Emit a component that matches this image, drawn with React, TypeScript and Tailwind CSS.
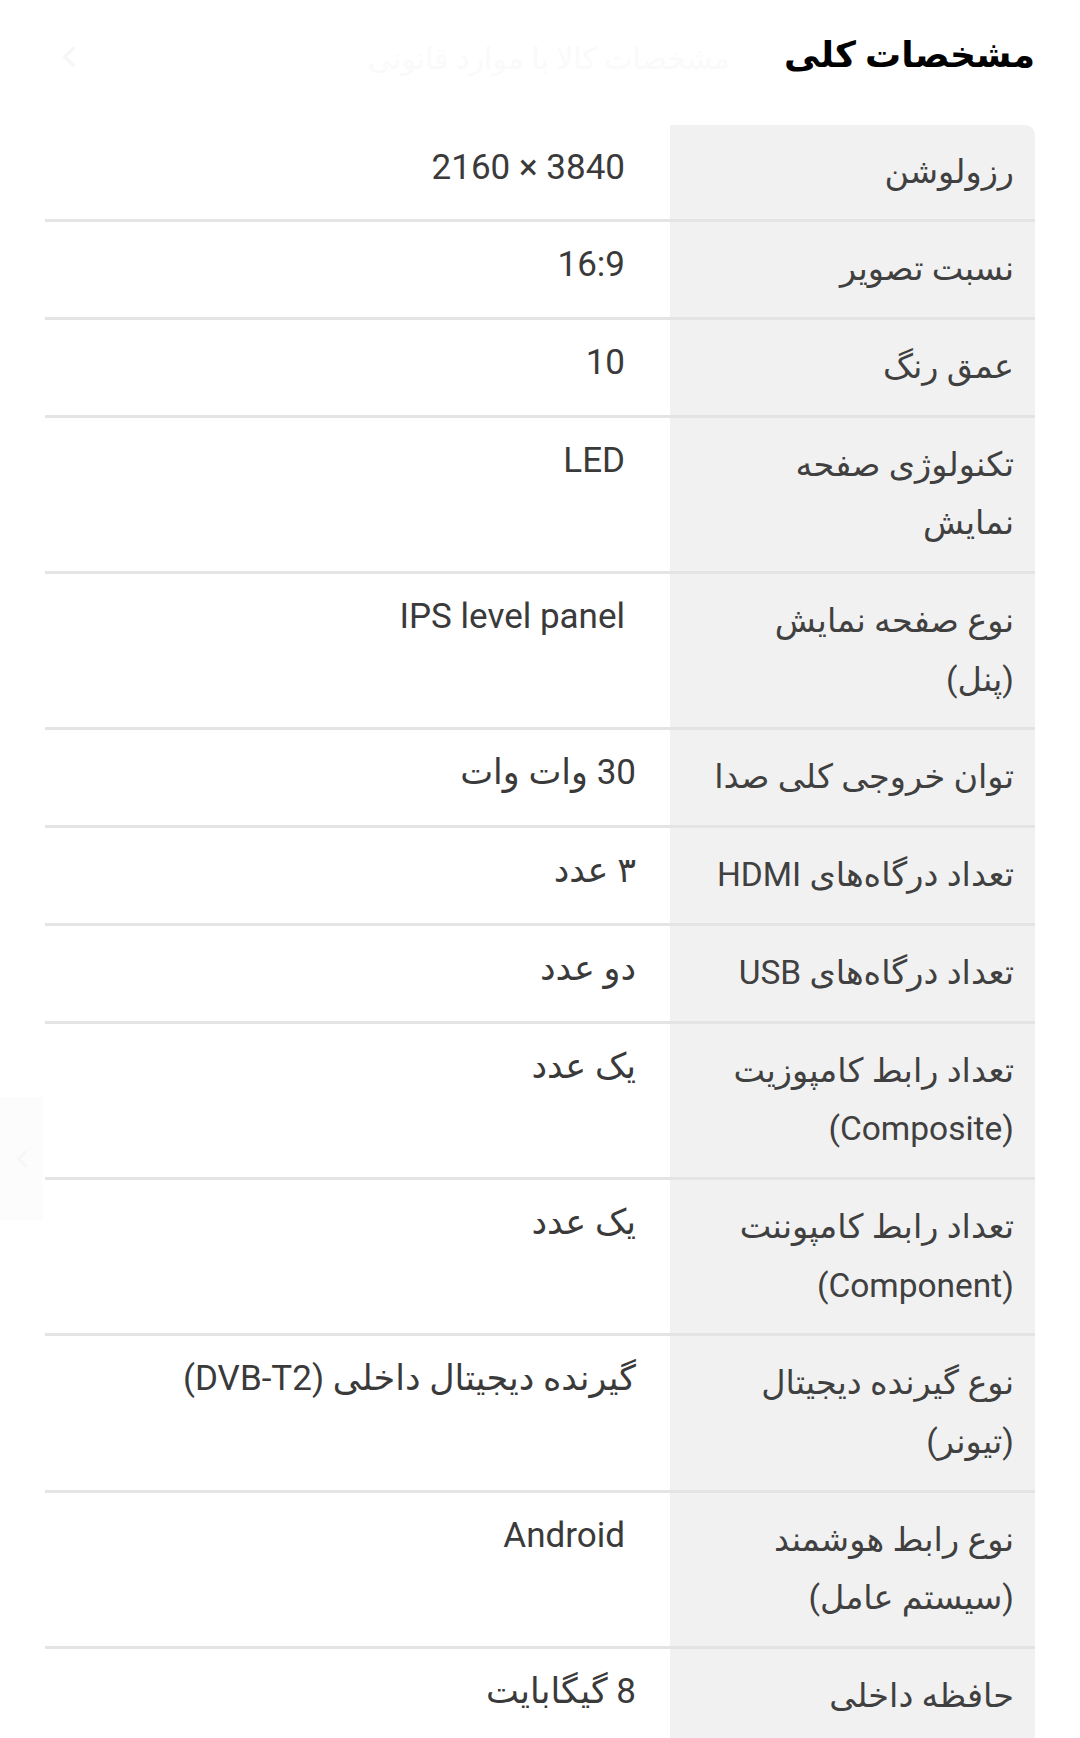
import { ChevronLeft } from "lucide-react";

type Spec = {
  label: string[];
  value: string;
  ltr?: boolean;
};

const specs: Spec[] = [
  { label: ["رزولوشن"], value: "2160 × 3840", ltr: true },
  { label: ["نسبت تصویر"], value: "16:9", ltr: true },
  { label: ["عمق رنگ"], value: "10", ltr: true },
  { label: ["تکنولوژی صفحه", "نمایش"], value: "LED", ltr: true },
  { label: ["نوع صفحه نمایش", "(پنل)"], value: "IPS level panel", ltr: true },
  { label: ["توان خروجی کلی صدا"], value: "30 وات وات" },
  { label: ["تعداد درگاه‌های HDMI"], value: "۳ عدد" },
  { label: ["تعداد درگاه‌های USB"], value: "دو عدد" },
  { label: ["تعداد رابط کامپوزیت", "(Composite)"], value: "یک عدد" },
  { label: ["تعداد رابط کامپوننت", "(Component)"], value: "یک عدد" },
  { label: ["نوع گیرنده دیجیتال", "(تیونر)"], value: "گیرنده دیجیتال داخلی (DVB-T2)" },
  { label: ["نوع رابط هوشمند", "(سیستم عامل)"], value: "Android", ltr: true },
  { label: ["حافظه داخلی"], value: "8 گیگابایت" },
];

function SpecRow({ spec, first }: { spec: Spec; first: boolean }) {
  return (
    <div className="flex border-b-[3px] border-[#e4e4e4]">
      <div
        className={`w-[365px] shrink-0 bg-[#f1f1f1] py-[18px] pr-[21px] text-[33.5px] leading-[58.7px] text-[#404040] ${
          first ? "rounded-tr-[10px]" : ""
        }`}
      >
        {spec.label.map((line) => (
          <div key={line} className="whitespace-nowrap">
            {line}
          </div>
        ))}
      </div>
      <div
        className={`min-w-0 flex-1 pt-[14px] text-[35px] leading-[58.7px] text-[#3a3a3a] ${
          spec.ltr ? "pr-[45px]" : "pr-[34px]"
        }`}
      >
        {spec.ltr ? <span dir="ltr">{spec.value}</span> : spec.value}
      </div>
    </div>
  );
}

export default function App() {
  return (
    <div
      dir="rtl"
      className="relative min-h-[1738px] overflow-hidden bg-white px-[45px] font-['Roboto','DejaVu_Sans',sans-serif]"
    >
      <span
        aria-hidden="true"
        className="absolute left-[368px] top-[36px] whitespace-nowrap text-[30px] text-[#fafafa]"
      >
        مشخصات کالا با موارد قانونی
      </span>
      <ChevronLeft
        aria-hidden="true"
        className="absolute left-[52px] top-[40px] size-[34px] text-[#f6f6f6]"
        strokeWidth={2.5}
      />
      <div className="absolute left-0 top-[1097px] flex h-[123px] w-[43px] items-center justify-center bg-[#fcfcfc]">
        <ChevronLeft className="size-[28px] text-[#f6f6f6]" strokeWidth={2.5} />
      </div>

      <h2 className="relative flex h-[124.5px] items-start pt-[30px] text-[36px] font-bold leading-[50px] text-black">
        مشخصات کلی
      </h2>

      <div>
        {specs.map((spec, i) => (
          <SpecRow key={spec.label.join(" ")} spec={spec} first={i === 0} />
        ))}
      </div>
    </div>
  );
}
